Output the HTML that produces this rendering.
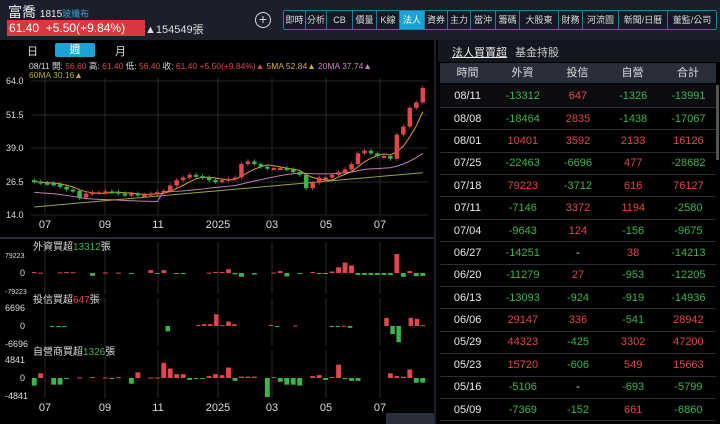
<!DOCTYPE html>
<html><head><meta charset="utf-8"><style>
*{margin:0;padding:0;box-sizing:border-box}
body{width:720px;height:424px;background:#000;overflow:hidden;font-family:"Liberation Sans","Noto Sans CJK TC",sans-serif;color:#ddd;position:relative}
.abs{position:absolute}
#hdr{left:0;top:0;width:720px;height:40px;background:#1c1f2b}
.tabs{left:283px;top:10px;height:20px;display:flex;border:1px solid #1a7fa0;border-radius:2px;width:434px}
.tabs div{font-size:9px;color:#ddd;line-height:18px;text-align:center;white-space:nowrap;overflow:hidden;flex-shrink:0;border-right:1px solid #1a7fa0;background:#151925}
.tabs div.on{background:#1aa3d6;color:#fff}
table{border-collapse:collapse;width:276px}
td{height:22.4px;font-size:11px;text-align:center;border-bottom:1px solid #2a2d35}
.g{color:#3bb54a}.r{color:#e0474c}.w{color:#e8e8e8}
</style></head><body>
<div id="hdr" class="abs"></div>
<div class="abs" style="left:8px;top:2px;font-size:14px;color:#eee">富喬 <span style="font-size:10px">1815</span><span style="font-size:9px;color:#3aa0d0">玻纖布</span></div>
<div class="abs" style="left:7px;top:20px;width:138px;height:16px;background:#d9393e;color:#fff;font-size:12px;line-height:16px;padding-left:2px">61.40&nbsp;&nbsp;+5.50(+9.84%)</div>
<div class="abs" style="left:145px;top:21px;font-size:11px;color:#ddd">▲154549張</div>
<div class="abs" style="left:255px;top:12px;width:16px;height:16px;border:1.5px solid #ddd;border-radius:50%;text-align:center;line-height:13px;font-size:14px;color:#ddd">+</div>
<div class="abs tabs"><div style="width:22px">即時</div><div style="width:21px">分析</div><div style="width:26px">CB</div><div style="width:24px">價量</div><div style="width:23px">K線</div><div class="on" style="width:25px">法人</div><div style="width:23px">資券</div><div style="width:23px">主力</div><div style="width:25px">當沖</div><div style="width:24px">籌碼</div><div style="width:39px">大股東</div><div style="width:24px">財務</div><div style="width:36px">河流圖</div><div style="width:49px">新聞/日曆</div><div style="width:48px;border:none">董監/公司</div></div>
<div class="abs" style="left:0;top:40px;width:436px;height:384px;background:#000;border-right:2px solid #1c1f2b"></div>
<div class="abs" style="left:27px;top:43px;font-size:11px">日</div>
<div class="abs" style="left:55px;top:43px;width:40px;height:14px;background:#1aa3d6;border-radius:2px;text-align:center;font-size:11px;color:#fff;line-height:14px">週</div>
<div class="abs" style="left:115px;top:43px;font-size:11px">月</div>
<div class="abs" style="left:29px;top:60px;font-size:8.5px;white-space:nowrap">08/11 開: <span class="r">56.60</span> 高: <span class="r">61.40</span> 低: <span class="r">56.40</span> 收: <span class="r">61.40</span> <span class="r">+5.50(+9.84%)▲</span> <span style="color:#d8b030">5MA 52.84▲</span> <span style="color:#d080c0">20MA 37.74▲</span></div>
<div class="abs" style="left:29px;top:70px;font-size:8.5px;color:#b8b040">60MA 30.16▲</div>
<svg class="abs" style="left:0;top:0" width="436" height="424" id="ch" font-family="Liberation Sans" font-size="9" fill="#ddd"></svg>
<div class="abs" style="left:438px;top:40px;width:282px;height:22px;background:#15171f"></div>
<div class="abs" style="left:452px;top:44px;font-size:11px;color:#eee;text-decoration:underline">法人買賣超</div>
<div class="abs" style="left:515px;top:44px;font-size:11px;color:#ccc">基金持股</div>
<div class="abs" style="left:440px;top:63px;width:276px;height:20px;background:#2a2d3a;display:flex;font-size:11px;color:#ddd;line-height:20px;text-align:center"><div style="width:55px">時間</div><div style="width:55px">外資</div><div style="width:55px">投信</div><div style="width:55px">自營</div><div style="width:56px">合計</div></div>
<div class="abs" style="left:440px;top:85px"><table id="tb"></table></div>
<div class="abs" style="left:716px;top:85px;width:3px;height:75px;background:#555"></div>
<script>
const rows=[["08/11",-13312,647,-1326,-13991],["08/08",-18464,2835,-1438,-17067],["08/01",10401,3592,2133,16126],["07/25",-22463,-6696,477,-28682],["07/18",79223,-3712,616,76127],["07/11",-7146,3372,1194,-2580],["07/04",-9643,124,-156,-9675],["06/27",-14251,"-",38,-14213],["06/20",-11279,27,-953,-12205],["06/13",-13093,-924,-919,-14936],["06/06",29147,336,-541,28942],["05/29",44323,-425,3302,47200],["05/23",15720,-606,549,15663],["05/16",-5106,"-",-693,-5799],["05/09",-7369,-152,661,-6860]];
let h="";rows.forEach((r,i)=>{h+="<tr"+(i==0?" style='background:#0c0c10'":"")+"><td class='w' style='width:55px'>"+r[0]+"</td>";for(let j=1;j<5;j++){let v=r[j];let c=v==="-"?"w":(v<0?"g":"r");h+="<td class='"+c+"' style='width:55px'>"+v+"</td>";}h+="</tr>";});
document.getElementById("tb").innerHTML=h;
const C=[26.5,26,25.8,25.5,24.5,23.5,23,20.5,22,22.5,22.5,22.8,22.7,22,21.5,22,21.5,21.5,22,22.5,23,25,27,28,29,28.5,28,27,26.5,27,27.5,28,33,34,33,32,31.5,31.5,31.5,31,30,29,24,26,28,28,29,30,31,33,37,38,37,36,36,35,44,47,54,56,61.4];
const N=C.length,x0=31,x1=426,dx=(x1-x0)/N;
const Y=p=>215-(p-14)*2.68;
let s="";
const gx=[45,105,158,218,272,326,380];
[81,115,148,182,215].forEach(y=>s+=`<line x1="31" x2="428" y1="${y}" y2="${y}" stroke="#333" stroke-width="0.8"/>`);
gx.forEach(x=>{s+=`<line x1="${x}" x2="${x}" y1="78" y2="215" stroke="#333" stroke-width="0.8"/>`;[[242,294],[298,346],[350,398]].forEach(a=>s+=`<line x1="${x}" x2="${x}" y1="${a[0]}" y2="${a[1]}" stroke="#333" stroke-width="0.8"/>`)});
[["64.0",84],["51.5",118],["39.0",151],["26.5",185],["14.0",218]].forEach(a=>s+=`<text x="6" y="${a[1]}" font-size="9">${a[0]}</text>`);
const lab=["07","09","11","2025","03","05","07"];
gx.forEach((x,i)=>{s+=`<text x="${x}" y="228" font-size="11" text-anchor="middle">${lab[i]}</text>`;s+=`<text x="${x}" y="411" font-size="11" text-anchor="middle">${lab[i]}</text>`});
s+=`<line x1="0" x2="434" y1="238" y2="238" stroke="#2a2d38" stroke-width="2"/>`;
let m5="",m20="",m60="";
for(let i=0;i<N;i++){const x=x0+dx*(i+.5);const ma=k=>{let a=0,c=0;for(let j=Math.max(0,i-k+1);j<=i;j++){a+=C[j];c++}return a/c};m5+=`${x},${Y(ma(5))} `;m20+=`${x},${Y(ma(20)-(i<20?4:0))} `;m60+=`${x},${Y(17+i*13/N)} `;}
s+=`<polyline points="${m60}" fill="none" stroke="#a0a040" stroke-width="1"/><polyline points="${m20}" fill="none" stroke="#c080b0" stroke-width="1"/><polyline points="${m5}" fill="none" stroke="#d8a030" stroke-width="1"/>`;
for(let i=0;i<N;i++){const o=i?C[i-1]:C[i]+0.5,c=C[i];const up=c>=o;const col=up?"#e0474c":"#3bb54a";const x=x0+dx*i+1;const t=Y(Math.max(o,c)),b=Y(Math.min(o,c));const hi=Y(Math.max(o,c)+0.8),lo=Y(Math.min(o,c)-0.8);s+=`<line x1="${x+dx/2-1}" x2="${x+dx/2-1}" y1="${hi}" y2="${lo}" stroke="${col}" stroke-width="0.8"/><rect x="${x}" y="${t}" width="${dx-2}" height="${Math.max(2,b-t)}" fill="${col}"/>`;}
function bars(z,hh,vals){let out="";const n=vals.length,d=(x1-x0)/n;vals.forEach((v,i)=>{if(!v)return;const x=x0+d*i+0.8;const hgt=Math.abs(v)*hh;out+=`<rect x="${x}" y="${v>0?z-hgt:z}" width="${d-1.6}" height="${Math.max(1,hgt)}" fill="${v>0?"#e0474c":"#3bb54a"}"/>`});return out}
const A=[.05,.02,0,0,.03,.05,.04,0,0,-.15,0,.03,0,.02,0,-.02,0,0,.15,-.05,.15,0,-.04,-.06,0,0,0,.02,.05,.05,.2,-.07,-.2,0,-.08,0,0,.02,.1,-.18,0,-.02,0,.05,-.02,-.02,.08,.3,.55,.4,-.1,-.1,-.1,-.1,-.1,-.1,1,-.2,.1,-.17,-.15];
s+=bars(273,19,A);
const B=[0,0,0,-.02,-.02,-.02,0,0,0,0,0,0,0,0,0,0,0,0,0,0,0,0,-.3,0,0,0,0,.05,.1,.1,.65,.05,.25,.1,0,0,0,0,0,.05,-.05,0,0,.03,0,0,0,0,0,-.05,-.05,.02,-.1,0,0,0,0,0,.45,-.45,-.9,0,.45,.4,.05];
s+=bars(326,18,B);
const D=[-.4,.25,0,-.35,-.35,-.05,0,.03,0,.05,0,.03,-.04,.04,0,-.3,.3,0,.02,.03,.8,.5,.2,.2,-.1,-.03,-.02,.1,.2,.15,.55,-.15,.07,.07,.07,0,-1,.05,-.2,-.35,-.35,-.4,0,.1,.15,-.1,.05,.7,-.06,-.15,-.15,0,0,0,0,.25,.1,.07,.45,-.25,-.25];
s+=bars(378,19,D);
s+=`<text x="33" y="250" font-size="10">外資買超<tspan fill="#3bb54a">13312</tspan>張</text><text x="33" y="303" font-size="10">投信買超<tspan fill="#e0474c">647</tspan>張</text><text x="33" y="355" font-size="10">自營商買超<tspan fill="#3bb54a">1326</tspan>張</text>`;
[["79223",258,7],["0",276,9],["-79223",294,7],["6696",311,9],["0",329,9],["-6696",347,9],["4841",363,9],["0",381,9],["-4841",399,9]].forEach(a=>s+=`<text x="${a[0]=="0"?20:5}" y="${a[1]}" font-size="${a[2]}">${a[0]}</text>`);
s+=`<rect x="386" y="413" width="48" height="11" fill="#2a2d3a"/>`;
document.getElementById("ch").innerHTML=s;
</script>
</body></html>
